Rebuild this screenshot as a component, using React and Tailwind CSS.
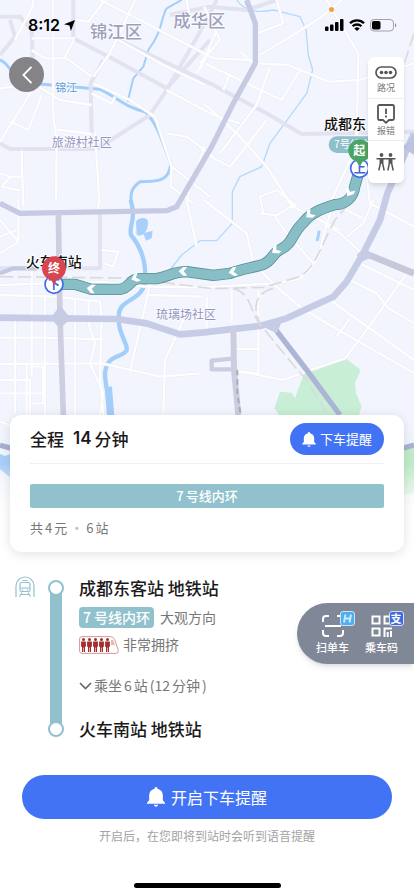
import React from "react";

const MINOR_ROADS = [
  "M100 0L98 20L45 120",
  "M160 0V350L170 420L168 600",
  "M95 115H225", "M95 150L135 175H200L275 230", "M222 120L192 175",
  "M0 265L100 250L180 300L275 315", "M100 265L0 425", "M125 285L85 390L30 365",
  "M170 388L275 402", "M285 400L298 600L292 640", "M275 280L335 310L345 290",
  "M228 60L265 65L315 0", "M300 0L420 60L640 175L760 180", "M405 0L330 160L280 230",
  "M345 115L500 200L615 255", "M500 270L640 345L720 370",
  "M280 250L390 300L465 350L515 500L512 560L580 610", "M500 400L560 410L640 470", "M515 500L630 590",
  "M0 520L30 530L65 530V455L70 620", "M30 530L5 560L60 572",
  "M55 600V725L0 760", "M0 660L55 725", "M0 710L50 690",
  "M590 220L630 150", "M612 20L660 120L600 190",
  "M830 0L850 70L770 100", "M780 165L870 110L965 50L1025 0", "M980 0L1075 160L1070 420",
  "M770 190L865 195L985 245L1080 240L1242 190",
  "M615 190L845 300L900 210", "M650 90L600 210", "M720 155L760 190", "M670 270L690 220", "M810 200L770 315L660 460",
  "M612 310L720 410L800 500L865 600L880 625", "M800 360L690 500L612 460", "M612 440L560 600L590 740",
  "M1060 460L990 610", "M1090 440L1110 610L1242 680",
  "M780 640L830 646L890 610", "M860 600L890 625L1020 690", "M790 640L780 590L830 570L880 610",
  "M612 600L740 700L760 790L840 870L900 920L980 970L1242 1120",
  "M825 650L860 700L940 790", "M1000 610L975 690L955 770L930 810L900 835L830 850L600 862L440 860L300 845L0 855",
  "M975 675L1020 700L1080 755", "M1120 600L1090 670L1040 710", "M1030 625L1090 655",
  "M1080 790L1242 870", "M1050 840L1130 880L1165 925L1242 970", "M990 900L1242 1080",
  "M1220 820L1150 920L1070 1030L1035 1075L930 1110L850 1140L700 1110", "M1050 955L1010 1010",
  "M600 1120L480 1130L305 1090L0 1092", "M0 885L170 890L300 905L305 950L300 1130L310 1245",
  "M0 960H60", "M0 1013H130L310 1018", "M95 800V1130", "M135 885V1245", "M45 960V1240", "M80 1090V1245", "M225 900V1245", "M265 900L268 980L285 1030L270 1090L310 1180L300 1245",
  "M0 1140H90V1270", "M0 1180H135", "M90 1100H130V1210H95", "M0 1265L30 1275", "M0 1345H60", "M38 1250V1500",
  "M450 850L435 920L390 1115", "M440 885L610 890", "M550 960L495 1080L490 1240",
  "M695 870V970", "M775 870V1120L690 1115", "M700 1047H775", "M620 890V990",
  "M305 750L355 755L340 800L310 790", "M560 0L570 60",
];

const MAJOR_ROADS = [
  "M220 0V115L345 180L500 265L630 120", "M0 50H60L95 90L98 170L60 240", "M0 165L45 110L30 60",
  "M0 430L30 447H290L450 345L500 270L600 95L650 0",
  "M275 400L272 250L310 180", "M345 115L630 250L800 340L905 402L1242 395",
  "M510 45L630 20L740 30L830 0", "M300 640V805H0",
];

const HIGHWAYS = [
  { d: "M740 0L766 70V190L700 310L635 440L530 620L500 632L60 640L0 610", w: 16, c: "#c6cae3" },
  { d: "M0 953L180 955L350 957L440 970L540 1003L612 997L780 978L860 955L1000 890L1040 845L1090 760L1140 660L1162 580L1242 400", w: 20, c: "#c7cce6" },
  { d: "M175 640L180 950L190 1245", w: 17, c: "#cdcfe1" },
  { d: "M1100 762L1242 820", w: 20, c: "#c7c9da" },
  { d: "M820 980L920 1110L1020 1245", w: 16, c: "#acb6d4" },
  { d: "M700 980L702 1110L715 1245", w: 18, c: "#cbcee0" },
  { d: "M702 1075L635 1082V1108H705", w: 13, c: "#cbcee0" },
  { d: "M0 820L40 805H110", w: 13, c: "#c2c8e0" },
  { d: "M0 1336L35 1345", w: 16, c: "#a9b0cf" },
  { d: "M1200 1347L1242 1335", w: 16, c: "#a9b4d4" },
];

const ROUTE =
  "M165 853L225 853L275 868L360 868C392 864 385 840 415 836L470 836C510 828 520 815 560 815L640 826L690 820C730 805 760 803 790 793C820 780 815 760 842 748C880 730 875 700 910 668C930 640 960 628 1005 614C1040 612 1060 590 1064 560L1080 505";

const ARROWS = [
  [272, 866, 8], [405, 834, -22], [548, 814, 0], [698, 816, -12], [826, 751, -35], [928, 644, -38], [1048, 578, -60],
];

function TransitMap() {
  return (
    <svg
      viewBox="0 0 1242 1560"
      aria-label="路线地图"
      role="img"
      className="absolute top-0 left-0 w-full font-['Noto_Sans_CJK_SC',sans-serif]"
    >
      <defs>
        <linearGradient id="fade" x1="0" y1="0" x2="0" y2="1">
          <stop offset="0" stopColor="#fff" stopOpacity="0" />
          <stop offset="0.8" stopColor="#fff" />
        </linearGradient>
      </defs>
      <rect width="1242" height="1560" fill="#f2f5fe" />
      <path d="M912 1122L950 1110L1035 1074L1082 1110L1065 1150L1068 1180L1085 1220L1075 1250H840L823 1225L840 1175L875 1178L885 1195L892 1175Z" fill="#c8eed5" />
      <path d="M1195 1350L1242 1335V1480L1195 1490Z" fill="#c0ecca" />

      <g fill="none" stroke="#a3cefa" strokeLinejoin="round">
        <path d="M0 180C30 190 40 240 75 248L180 257L300 268C350 290 370 320 435 335C480 380 490 440 512 490C510 545 470 545 420 545C385 570 395 590 392 610" strokeWidth="9" />
        <path d="M545 0L500 25C480 60 490 90 445 150L430 200L400 235L383 305" strokeWidth="6" />
        <path d="M392 600C410 660 385 680 393 705C430 750 440 800 434 850C425 900 360 900 357 940C350 1000 385 1030 380 1050C370 1075 320 1060 315 1120C315 1170 335 1200 328 1250" strokeWidth="13" />
        <path d="M325 1160L332 1250" strokeWidth="22" />
        <path d="M710 0C730 30 770 40 820 30L900 50L918 90L925 165L938 210L920 280L810 430L785 500L720 530L697 575V670L650 722H600L545 765L510 810" strokeWidth="4" stroke="#b5d8fb" />
      </g>
      <g fill="#a9d0fa">
        <path d="M408 670C405 655 440 645 444 665C445 690 430 715 410 704Z" />
        <path d="M430 700L458 692L455 715L438 722Z" />
        <path d="M954 690L962 694L956 724L947 722Z" />
        <path d="M0 1362L15 1368L30 1362V1432L0 1408Z" />
      </g>

      <g fill="none" stroke="#e2e2f1" strokeWidth="12" strokeLinejoin="round">
        {MAJOR_ROADS.map((d) => <path key={d} d={d} />)}
      </g>
      <g fill="none" stroke="#e9ebf5" strokeWidth="10" strokeLinejoin="round">
        {MINOR_ROADS.map((d) => <path key={d} d={d} />)}
      </g>
      <g fill="none" stroke="#fefefe" strokeWidth="7" strokeLinejoin="round">
        {MINOR_ROADS.map((d) => <path key={d} d={d} />)}
      </g>
      <g fill="none" strokeLinejoin="round">
        {HIGHWAYS.map((r) => <path key={r.d} d={r.d} stroke={r.c} strokeWidth={r.w} />)}
      </g>
      <path d="M152 955L180 916L212 955L180 986Z" fill="#c8cce2" />
      <path d="M790 980L850 955L830 1000Z M1070 765L1095 740L1120 770L1085 785Z" fill="#c7cce6" />
      <path d="M1222 430L1242 400V465L1205 440Z" fill="#bcc4e2" />
      <g fill="none" stroke="#dcd9de" strokeWidth="5" strokeDasharray="40 14">
        <path d="M0 830L380 834L640 866L790 862L900 830C950 800 960 740 1005 660L1065 590" />
        <path d="M700 866C760 880 750 950 790 985L880 1095L920 1140L985 1245" />
        <path d="M820 865C760 880 760 930 780 970" />
        <path d="M1242 100L1200 230" />
      </g>
      <path d="M712 1110V1180L722 1245" fill="none" stroke="#a9abb9" strokeWidth="6" strokeDasharray="16 12" />

      <g fill="#8f93c1" stroke="#fff" strokeWidth="4" paintOrder="stroke">
        <text x="270" y="113" fontSize="52" fill="#9ea1bc" fontWeight="500">锦江区</text>
        <text x="520" y="80" fontSize="52" fill="#9ea1bc" fontWeight="500">成华区</text>
        <text x="155" y="440" fontSize="36">旅游村社区</text>
        <text x="468" y="957" fontSize="36">琉璃场社区</text>
        <text x="166" y="275" fontSize="33" fill="#5796d6">锦江</text>
      </g>

      <path d={ROUTE} fill="none" stroke="#5b9095" strokeWidth="34" strokeLinejoin="round" />
      <path d={ROUTE} fill="none" stroke="#88bec6" strokeWidth="29" strokeLinejoin="round" />
      {ARROWS.map(([x, y, a]) => (
        <path key={x} transform={`translate(${x} ${y}) rotate(${a})`} d="M-12 0L2 -13H14L3 0L14 13H2Z" fill="#fff" />
      ))}

      <rect x="986" y="409" width="200" height="50" rx="25" fill="#8dc0ca" />
      <text x="1002" y="445" fontSize="31" fill="#fff">7号线内环</text>
      <g fill="#111" stroke="#fff" strokeWidth="5" paintOrder="stroke" fontSize="42" fontWeight="500">
        <text x="972" y="387">成都东</text>
        <text x="77" y="801">火车南站</text>
      </g>

      <g fontWeight="700" textAnchor="middle">
        <circle cx="1079" cy="505" r="27" fill="#fff" stroke="#4169e8" strokeWidth="5" />
        <text x="1079" y="519" fontSize="36" fill="#3f66d8">上</text>
        <path d="M1079 500L1070 485A34 34 0 1 1 1088 485Z" fill="#4aa465" />
        <text x="1078" y="465" fontSize="36" fill="#fff">起</text>
        <circle cx="162" cy="853" r="27" fill="#fff" stroke="#4169e8" strokeWidth="5" />
        <text x="162" y="867" fontSize="36" fill="#3f66d8">下</text>
        <path d="M162 856L154 840A36 36 0 1 1 170 840Z" fill="#d8454f" />
        <text x="162" y="819" fontSize="36" fill="#fff">终</text>
      </g>
      <rect y="1390" width="1242" height="170" fill="url(#fade)" />
    </svg>
  );
}

function Bell({ className }) {
  return (
    <svg viewBox="0 0 20 22" fill="currentColor" aria-hidden="true" className={className}>
      <path d="M10 0a1.700 1.700 0 0 1 1.700 1.700C15.300 2.600 17.600 5.400 17.600 9v5.500l2.400 2.800v1.200H0v-1.200l2.400-2.800V9c0-3.600 2.300-6.400 5.900-7.300A1.700 1.700 0 0 1 10 0Z" />
      <path d="M7.600 19.700h4.800c-.2 1.200-1.200 2-2.400 2s-2.200-.8-2.400-2Z" />
    </svg>
  );
}

function StatusBar() {
  return (
    <div className="flex h-[50px] items-center justify-between pr-[17px] pl-7 text-black">
      <div className="flex items-center gap-1">
        <span className="font-['Inter',sans-serif] text-base font-semibold">8:12</span>
        <svg viewBox="0 0 12 12" className="size-[11px]" aria-hidden="true"><path d="M12 0L7.500 12L6 6L0 4.500Z" /></svg>
      </div>
      <div className="relative flex items-center gap-[5px]">
        <i className="absolute -top-3 left-1 size-[5px] rounded-full bg-[#f0a03c]" />
        <svg viewBox="0 0 19 12" className="h-3 w-[19px]" aria-hidden="true">
          <rect x="0" y="7.500" width="3.500" height="4.500" rx="1" /><rect x="5" y="5.500" width="3.500" height="6.500" rx="1" />
          <rect x="10" y="3" width="3.500" height="9" rx="1" /><rect x="15" y="0" width="3.500" height="12" rx="1" />
        </svg>
        <svg viewBox="0 0 16 12" className="h-3 w-4" fill="none" stroke="#000" strokeWidth="2.300" aria-hidden="true">
          <path d="M1 4.300a10 10 0 0 1 14 0M3.600 7.300a6.300 6.300 0 0 1 8.800 0" />
          <path d="M8 12L5.300 9.400a4 4 0 0 1 5.400 0Z" fill="#000" stroke="none" />
        </svg>
        <svg viewBox="0 0 27 13" className="h-[13px] w-[27px]" aria-hidden="true">
          <rect x="0.500" y="0.500" width="23" height="11.500" rx="3.500" fill="none" stroke="#a0a0a6" />
          <rect x="2" y="2" width="8.500" height="8.500" rx="1.800" /><path d="M25 4.200c1.600.5 1.600 3.600 0 4.100Z" fill="#8d8d93" />
        </svg>
      </div>
    </div>
  );
}

function MapTools() {
  return (
    <div className="flex w-9 flex-col divide-y divide-[#eee] rounded-md bg-white text-[9px] leading-3 text-[#777] shadow-md">
      <button className="flex h-[42px] flex-col items-center gap-[3px] pt-[9px]">
        <svg viewBox="0 0 22 13" className="h-[13px] w-[22px]" aria-hidden="true">
          <rect x="1" y="1" width="20" height="11" rx="5.500" fill="none" stroke="#555" strokeWidth="1.700" />
          <g fill="#555"><circle cx="6.500" cy="6.500" r="1.800" /><circle cx="11" cy="6.500" r="1.800" /><circle cx="15.500" cy="6.500" r="1.800" /></g>
        </svg>
        路况
      </button>
      <button className="flex h-[42px] flex-col items-center gap-px pt-[5px]">
        <svg viewBox="0 0 18 20" className="h-5 w-[18px]" fill="none" stroke="#555" strokeWidth="1.800" aria-hidden="true">
          <path d="M2.500 1h13q1.500 0 1.500 1.500v12q0 1.500-1.500 1.500H12l-3 2.800L6 16H2.500Q1 16 1 14.500v-12Q1 1 2.500 1ZM9 4.500v5.500M9 11.500v2" strokeLinejoin="round" />
        </svg>
        报错
      </button>
      <button aria-label="同行" className="flex h-[42px] items-center justify-center">
        <svg viewBox="0 0 20 18" className="h-[18px] w-5" aria-hidden="true">
          <g fill="#555"><circle cx="5.500" cy="2" r="1.900" /><circle cx="14.500" cy="2" r="1.900" /></g>
          <path d="M.5 5.700h19M4.300 5.700v5L2.800 17.500M6.700 5.700v5L8.200 17.500M13.300 5.700v5L11.800 17.500M15.700 5.700v5L17.200 17.500M5.500 5.700v5M14.500 5.700v5" fill="none" stroke="#555" strokeWidth="1.500" />
        </svg>
      </button>
    </div>
  );
}

function SummaryCard() {
  return (
    <section className="mx-2.5 rounded-xl bg-white px-5 pt-2 pb-[14px] shadow-[0_2px_12px_rgba(0,0,0,0.12)]">
      <div className="flex items-center justify-between border-b border-[#f0f0f0] pb-2">
        <h1 className="flex gap-[9px] text-[17px] font-medium text-[#1a1a1a]">
          <span>全程</span>
          <span className="flex gap-[3px]"><span className="font-['Inter',sans-serif] font-semibold">14</span>分钟</span>
        </h1>
        <button className="flex h-8 items-center gap-1 rounded-full bg-[#4273f5] px-3 text-[13px] text-white">
          <Bell className="h-[15px] w-[14px]" />
          下车提醒
        </button>
      </div>
      <div className="mt-5 flex h-6 items-center justify-center gap-[2px] rounded-[2px] bg-[#90c1cd] text-[13px] font-medium text-white"><span>7</span>号线内环</div>
      <p className="mt-[10px] flex gap-[2px] text-[13px] leading-5 text-[#777]">
        共<span>4</span>元<span className="px-px text-[#bbb]">·</span><span>6</span>站
      </p>
    </section>
  );
}

function CrowdMeter() {
  return (
    <svg viewBox="0 0 40 18" className="h-[18px] w-10" aria-hidden="true">
      <path d="M3 .6h28.500q3 0 4.300 3.200l3.400 10.400q.8 3.200-2.300 3.200H3Q.6 17.400.6 15V3Q.6.6 3 .6Z" fill="#fff" stroke="#d8979b" />
      <path d="M32 4h2l2 5h-4Z" fill="#e6b7ba" />
      {[4.500, 10.500, 16.500, 22.500, 28.500].map((x) => (
        <g key={x} fill="#a32e2b">
          <circle cx={x} cy="3.600" r="1.500" />
          <path d={`M${x - 2.400} 5.500h4.800v5.200h-.9v5.300h-1.200v-4.500h-.6v4.500h-1.200v-5.300h-.9Z`} />
        </g>
      ))}
    </svg>
  );
}

function Track() {
  return (
    <div className="flex w-4 flex-col items-center bg-[linear-gradient(#90c1cd,#90c1cd)] bg-[length:12px_calc(100%-16px)] bg-center bg-no-repeat">
      <i className="size-4 rounded-full border-2 border-[#90c1cd] bg-white" />
      <i className="mt-auto size-4 rounded-full border-2 border-[#90c1cd] bg-white" />
    </div>
  );
}

function RouteDetail() {
  return (
    <section className="relative mt-6 flex pl-[15px] text-sm text-[#777]">
      <svg viewBox="0 0 20 22" className="mr-[13px] h-[22px] w-5 shrink-0" fill="none" stroke="#90c1cd" strokeWidth="1.200" aria-hidden="true">
        <path d="M1 21V10a9 9 0 0 1 18 0V21" />
        <path d="M6.500 6.500h7q1.500 0 1.500 1.500V14q0 1.500-1.500 1.500h-7Q5 15.500 5 14V8Q5 6.500 6.500 6.500ZM5 12h10M7.500 4.500h5M7 16.500L4.500 20.500M13 16.500l2.500 4M6.500 18.500h7" />
        <path d="M7 13.800h1.200M11.800 13.800h1.200" />
      </svg>
      <div className="flex py-1"><Track /></div>
      <div className="ml-[15px] flex flex-col items-start">
        <h2 className="text-[17px] leading-6 font-medium text-[#1a1a1a]">成都东客站 地铁站</h2>
        <div className="mt-[7px] flex items-center gap-[6px] leading-[21px]">
          <span className="rounded-[4px] bg-[#90c1cd] px-1 font-medium text-white"><span className="mr-[3px]">7</span>号线内环</span>
          <span>大观方向</span>
        </div>
        <div className="mt-[6px] flex items-center gap-1 leading-[21px]">
          <CrowdMeter />
          <span>非常拥挤</span>
        </div>
        <button className="mt-5 flex items-center gap-[2px] leading-[21px]">
          <svg viewBox="0 0 13 8" className="h-2 w-[13px]" fill="none" stroke="#666" strokeWidth="1.600" aria-hidden="true"><path d="M1 1l5.500 5.500L12 1" /></svg>
          乘坐<span>6</span>站<span>(12</span>分钟<span>)</span>
        </button>
        <h2 className="mt-[21px] text-[17px] leading-6 font-medium text-[#1a1a1a]">火车南站 地铁站</h2>
      </div>
      <div className="absolute top-[27px] right-0 flex h-[61px] w-[117px] gap-4 rounded-l-full bg-[#808797] pl-[19px] text-[11px] leading-4 font-medium text-white shadow-md">
        <button className="flex flex-col items-center gap-[2px] pt-[6px]">
          <span className="relative flex h-7 items-end">
            <svg viewBox="0 0 22 22" className="size-[22px]" fill="none" stroke="#fff" strokeWidth="2" aria-hidden="true">
              <path d="M1 7V4q0-3 3-3h3M15 1h3q3 0 3 3v3M1 15v3q0 3 3 3h3M15 21h3q3 0 3-3v-3M3 11h16" />
            </svg>
            <svg viewBox="0 0 15 15" className="absolute top-[2px] left-[18px] size-[15px]" aria-hidden="true">
              <rect x=".5" y=".5" width="14" height="14" rx="2.500" fill="#4eaef2" stroke="#c8e5fb" />
              <path d="M5.500 3.500L4 11.500M11 3.500L9.500 11.500M4.500 7.500h6" stroke="#c9e9ff" strokeWidth="2" />
            </svg>
          </span>
          扫单车
        </button>
        <button className="flex flex-col items-center gap-[2px] pt-[6px]">
          <span className="relative flex h-7 items-end">
            <svg viewBox="0 0 22 22" className="size-[22px]" fill="none" stroke="#fff" strokeWidth="2" aria-hidden="true">
              <path d="M1.500 1.500h7v7h-7ZM13.500 1.500h7v7h-7ZM1.500 13.500h7v7h-7ZM12.500 13.500h8.500M13.500 13v9M20 16v6M16.700 17v5" />
            </svg>
            <span className="absolute top-[2px] left-[18px] flex size-[15px] items-center justify-center rounded-[3px] border border-[#d5e1fb] bg-[#3a6be0] text-[11px] leading-none font-bold">支</span>
          </span>
          乘车码
        </button>
      </div>
    </section>
  );
}

export default function App() {
  return (
    <main className="relative flex min-h-screen flex-col overflow-hidden bg-white font-['Noto_Sans_CJK_SC',sans-serif]">
      <TransitMap />
      <div className="relative flex flex-1 flex-col">
        <header className="h-[415px]">
          <StatusBar />
          <div className="flex items-start justify-between pt-[7px] pr-[10px] pl-[9px]">
            <button aria-label="返回" className="flex size-[35px] items-center justify-center rounded-full bg-[#848487]">
              <svg viewBox="0 0 12 20" className="h-[18px] w-3" fill="none" stroke="#fff" strokeWidth="2" aria-hidden="true"><path d="M11 1L2 10l9 9" /></svg>
            </button>
            <MapTools />
          </div>
        </header>
        <SummaryCard />
        <RouteDetail />
        <div className="mt-[34px] px-[22px] text-center">
          <button className="flex h-11 w-full items-center justify-center gap-[6px] rounded-full bg-[#4273f5] text-base text-white">
            <Bell className="h-5 w-[18px]" />
            开启下车提醒
          </button>
          <p className="mt-2 text-xs leading-[18px] text-[#a3a3a3]">开启后，在您即将到站时会听到语音提醒</p>
        </div>
        <div className="mx-auto mt-auto mb-2 h-[5px] w-[147px] rounded-full bg-black" />
      </div>
    </main>
  );
}
